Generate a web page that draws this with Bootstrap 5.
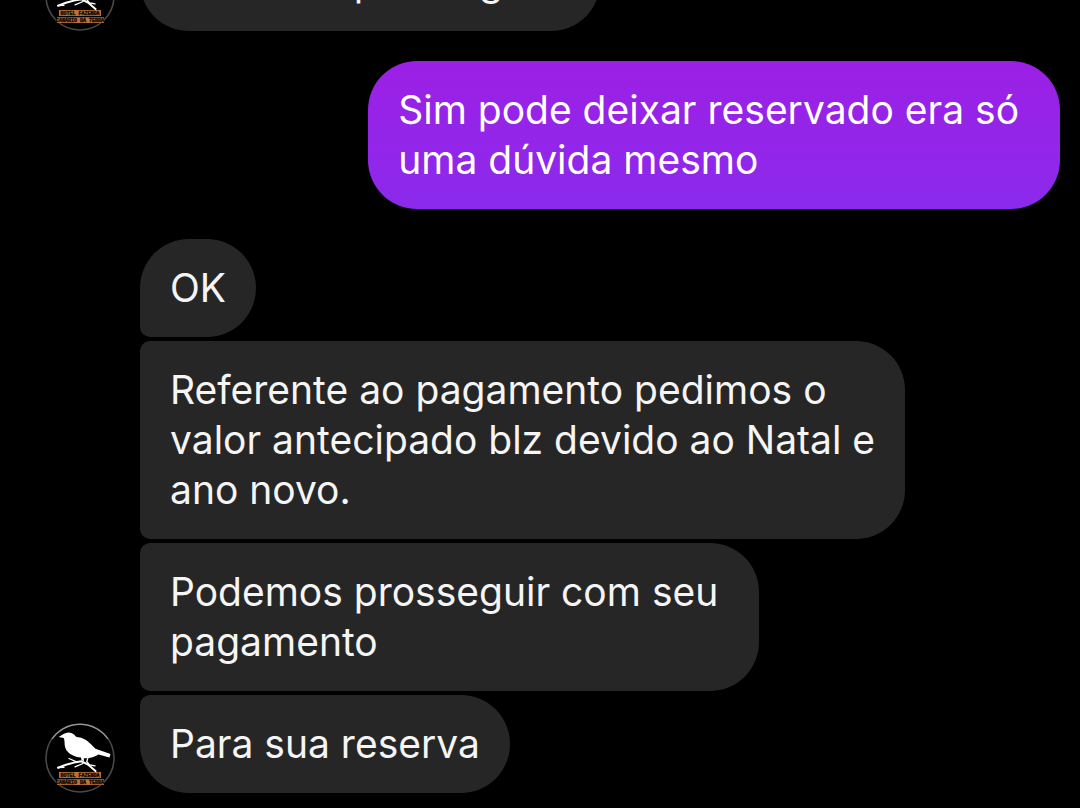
<!DOCTYPE html>
<html lang="pt-BR">
<head>
<meta charset="utf-8">
<meta name="viewport" content="width=device-width, initial-scale=1">
<title>Conversa</title>
<link href="https://cdn.jsdelivr.net/npm/bootstrap@5.3.0/dist/css/bootstrap.min.css" rel="stylesheet">
<style>
  body { background: #000; font-family: Inter, "Liberation Sans", sans-serif; }
  .chat { padding: 0 20px 15px 45px; gap: 30px; }
  .incoming { gap: 25px; }
  .stack { gap: 4px; }
  .bubble {
    padding: 24px 30px;
    border-radius: 49px;
    font-size: 39px;
    line-height: 50px;
    max-width: 770px;
  }
  .bubble-in { background: #262626; color: #f5f5f5; }
  .bubble-out { background: linear-gradient(#9c20e5, #8b2aec); color: #fff; }
  .join-top { border-top-left-radius: 10px; }
  .join-bottom { border-bottom-left-radius: 10px; }
  .avatar { width: 70px; height: 70px; }
</style>
</head>
<body>
<svg class="d-none" xmlns="http://www.w3.org/2000/svg">
  <symbol id="bird" viewBox="0 0 70 70">
    <circle cx="35" cy="35" r="34" fill="#000" stroke="#484848" stroke-width="1.6"/>
    <path d="M7 16A34 34 0 0 1 63 16" fill="none" stroke="#999" stroke-width="1.2"/>
    <path d="M13.7 14L18.5 11Q22.5 8.4 27 10.2Q29.8 11.6 31 13.8C37 14.8 40.5 16.2 44 19.5C47 22 48.8 24.3 50.5 25.8L65.5 31L64.5 34.6L53.5 31.5C49.5 34 44 35.8 38.8 35.2L39 38L36.6 37.4L36 34.6C29.5 34.2 22.5 30.8 20.3 24.8C19 20.8 20.2 17.8 18.7 14.9Z" fill="#fff"/>
    <g fill="none" stroke="#fff" stroke-linecap="round" stroke-linejoin="round">
      <path d="M13 44.7L21 41.8L29 39.6L36.5 38.3L43 41.5L50.5 48" stroke-width="2"/>
      <path d="M24 35.5L32 39.2M43 34.5L41.8 38.5L44.5 42M30 43.8L38 40.5M43 41.5L50 42.8M13 44.7L19 44.3" stroke-width="1.3"/>
    </g>
    <path d="M14 49H56V55H14ZM12 56.2H59V62H12Z" fill="#bd7338"/>
    <g font-family="Liberation Mono, monospace" font-weight="700" font-size="5" fill="#160b06" stroke="#160b06" stroke-width=".4">
      <text x="35" y="54" text-anchor="middle">HOTEL FAZENDA</text>
      <text x="35" y="61" text-anchor="middle">CANÁRIO DA TERRA</text>
    </g>
  </symbol>
</svg>

<main class="chat vh-100 overflow-hidden d-flex flex-column justify-content-end">
  <div class="incoming d-flex align-items-end flex-shrink-0">
    <svg class="avatar flex-shrink-0" role="img" aria-label="Hotel Fazenda Canário da Terra"><use href="#bird"/></svg>
    <div class="bubble bubble-in join-top">Podemos prosseguir?</div>
  </div>

  <div class="bubble bubble-out align-self-end flex-shrink-0">Sim pode deixar reservado era só&nbsp;<br>uma dúvida mesmo</div>

  <div class="incoming d-flex align-items-end flex-shrink-0">
    <svg class="avatar flex-shrink-0" role="img" aria-label="Hotel Fazenda Canário da Terra"><use href="#bird"/></svg>
    <div class="stack d-flex flex-column align-items-start">
      <div class="bubble bubble-in join-bottom">OK</div>
      <div class="bubble bubble-in join-top join-bottom">Referente ao pagamento pedimos o<br>valor antecipado blz devido ao Natal e<br>ano novo.</div>
      <div class="bubble bubble-in join-top join-bottom">Podemos prosseguir com seu&nbsp;<br>pagamento</div>
      <div class="bubble bubble-in join-top">Para sua reserva</div>
    </div>
  </div>
</main>
<script src="https://cdn.jsdelivr.net/npm/bootstrap@5.3.0/dist/js/bootstrap.bundle.min.js"></script>
</body>
</html>
